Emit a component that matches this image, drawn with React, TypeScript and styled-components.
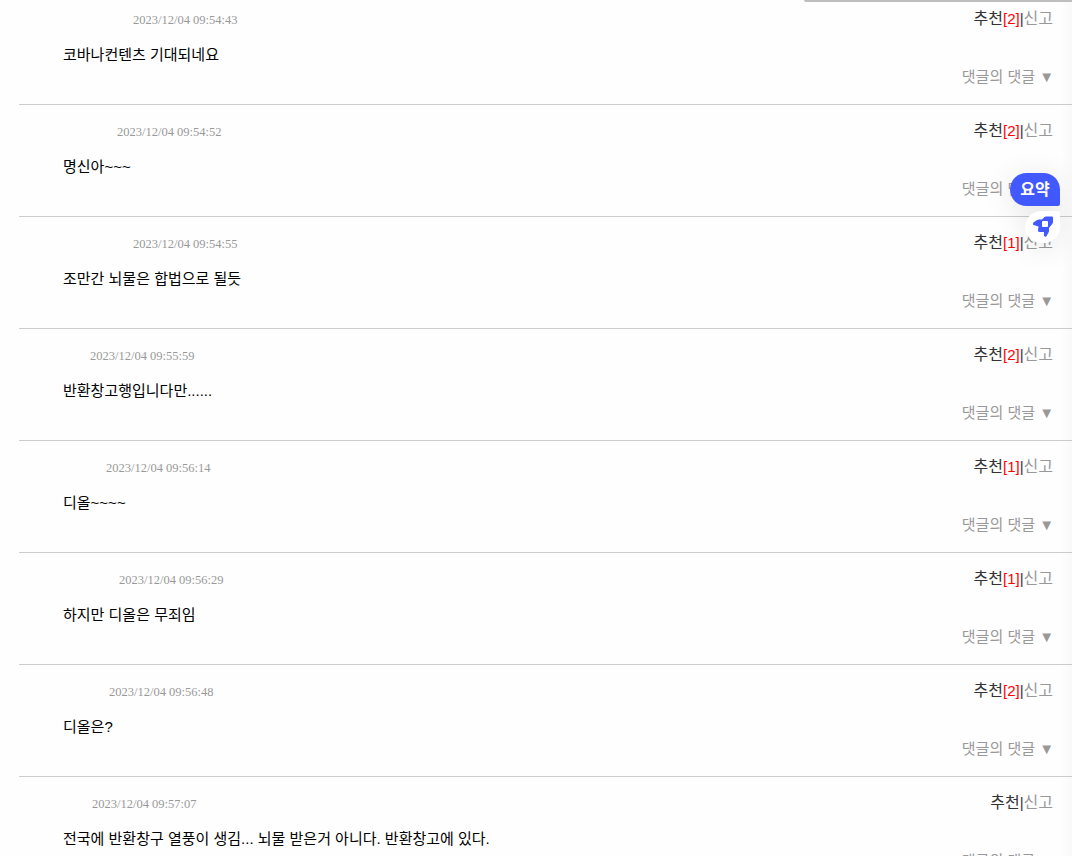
import React from "react";
import styled, { createGlobalStyle } from "styled-components";

const GlobalStyle = createGlobalStyle`
  *, *::before, *::after { box-sizing: border-box; }
  html { background: #fefefe; }
  body {
    margin: 0;
    font-family: "Liberation Sans", "Noto Sans CJK KR", sans-serif;
    font-size: 15px;
    line-height: 22px;
    color: #000;
  }
  button {
    margin: 0;
    padding: 0;
    border: 0;
    background: none;
    font: inherit;
    color: inherit;
    cursor: pointer;
  }
`;

const Page = styled.main`
  position: relative;
  height: 100vh;
  overflow: hidden;
`;

const CommentList = styled.ul`
  margin: 0;
  padding: 0 0 0 19px;
  list-style: none;
`;

const CommentItem = styled.li`
  height: 112px;
  padding: 15px 18px 0 44px;
  border-bottom: 1px solid #ccc;

  &:first-child {
    height: 105px;
    padding-top: 8px;
  }
`;

const CommentHead = styled.div`
  display: flex;
  align-items: center;
  height: 22px;
  padding-right: 1px;
`;

const Nickname = styled.span<{ $width: number }>`
  flex: none;
  width: ${(p) => p.$width}px;
`;

const PostedAt = styled.time`
  font-family: "Liberation Serif", serif;
  font-size: smaller;
  padding-top: 2px;
  color: #999;
`;

const Actions = styled.div`
  display: flex;
  margin-left: auto;
  color: #333;
`;

const ActionButton = styled.button<{ $muted?: boolean }>`
  font-size: 16px;
  color: ${(p) => (p.$muted ? "#999" : "#333")};
`;

const VoteCount = styled.span`
  color: #f00;
`;

const CommentText = styled.p`
  margin: 14px 0 0;
`;

const ReplyRow = styled.div`
  display: flex;
  justify-content: flex-end;
`;

const ReplyToggle = styled.button`
  color: #999;
`;

const ProgressBar = styled.div`
  position: absolute;
  top: 0;
  right: 0;
  width: 25%;
  height: 2px;
  border-bottom-left-radius: 2px;
  background: #bebebe;
`;

const EdgeShade = styled.div`
  position: absolute;
  top: 2px;
  right: 0;
  bottom: 0;
  width: 12px;
  background: linear-gradient(to right, rgba(0, 0, 0, 0), rgba(0, 0, 0, 0.02));
`;

const FloatingTools = styled.aside`
  position: absolute;
  top: 173px;
  right: 12px;
  display: flex;
  flex-direction: column;
  align-items: flex-end;
  gap: 5px;
`;

const SummaryButton = styled.button`
  width: 50px;
  height: 33px;
  border-radius: 17px 17px 2px 17px;
  background: #4259ff;
  color: #fff;
  font-size: 16px;
  font-weight: 700;
  box-shadow: 0 4px 30px rgba(0, 0, 0, 0.1);
`;

const LaunchButton = styled.button`
  display: flex;
  align-items: center;
  justify-content: center;
  width: 35px;
  height: 32px;
  border-radius: 17px 2px 17px 17px;
  background: #fff;
  box-shadow: 0 4px 30px rgba(0, 0, 0, 0.1);
`;

type Comment = {
  time: string;
  nickWidth: number;
  votes?: number;
  text: string;
};

const comments: Comment[] = [
  { time: "2023/12/04 09:54:43", nickWidth: 70, votes: 2, text: "코바나컨텐츠 기대되네요" },
  { time: "2023/12/04 09:54:52", nickWidth: 54, votes: 2, text: "명신아~~~" },
  { time: "2023/12/04 09:54:55", nickWidth: 70, votes: 1, text: "조만간 뇌물은 합법으로 될듯" },
  { time: "2023/12/04 09:55:59", nickWidth: 27, votes: 2, text: "반환창고행입니다만......" },
  { time: "2023/12/04 09:56:14", nickWidth: 43, votes: 1, text: "디올~~~~" },
  { time: "2023/12/04 09:56:29", nickWidth: 56, votes: 1, text: "하지만 디올은 무죄임" },
  { time: "2023/12/04 09:56:48", nickWidth: 46, votes: 2, text: "디올은?" },
  { time: "2023/12/04 09:57:07", nickWidth: 29, text: "전국에 반환창구 열풍이 생김... 뇌물 받은거 아니다. 반환창고에 있다." },
];

const RocketIcon = () => (
  <svg width="22" height="22" viewBox="0 0 22 22" aria-hidden="true">
    <path
      fill="#4259ff"
      d="M20 .5Q21 .5 21 1.500V6q0 1-.8 2L17 12v3.500l-2.500 4.800q-1.200 1-2.500-.5L12 16H7.500q-2 0-1.500-2l.5-3.500-5-1.500Q0 8 1.500 6.500L5 4q1-.5 2-.5h3L12.500 1q.6-.5 1.500-.5z"
    />
    <rect x="10" y="5" width="6" height="6" rx="1" fill="#fff" />
  </svg>
);

export default function App() {
  return (
    <>
      <GlobalStyle />
      <Page>
        <CommentList>
          {comments.map((c) => (
            <CommentItem key={c.time}>
              <CommentHead>
                <Nickname $width={c.nickWidth} />
                <PostedAt>{c.time}</PostedAt>
                <Actions>
                  <ActionButton type="button">추천</ActionButton>
                  {c.votes && <VoteCount>[{c.votes}]</VoteCount>}
                  <span>|</span>
                  <ActionButton type="button" $muted>
                    신고
                  </ActionButton>
                </Actions>
              </CommentHead>
              <CommentText>{c.text}</CommentText>
              <ReplyRow>
                <ReplyToggle type="button">댓글의 댓글 ▼</ReplyToggle>
              </ReplyRow>
            </CommentItem>
          ))}
        </CommentList>
        <ProgressBar />
        <EdgeShade />
        <FloatingTools>
          <SummaryButton type="button">요약</SummaryButton>
          <LaunchButton type="button" aria-label="바로가기">
            <RocketIcon />
          </LaunchButton>
        </FloatingTools>
      </Page>
    </>
  );
}
